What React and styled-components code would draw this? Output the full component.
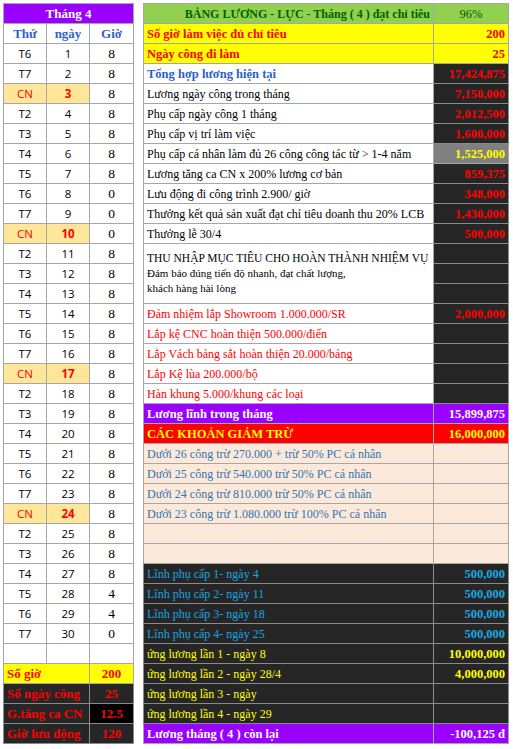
import React from 'react'
import styled, { createGlobalStyle } from 'styled-components'

const GlobalStyle = createGlobalStyle`
  html, body {
    margin: 0;
    padding: 0;
    background: #ffffff;
  }
  body {
    font-family: "Liberation Serif", "Times New Roman", serif;
  }
`

const Page = styled.div`
  display: flex;
  align-items: flex-start;
  gap: 9px;
  padding: 3px 0 0 3px;
  width: 513px;
  height: 749px;
  box-sizing: border-box;
`

const Sheet = styled.table`
  border-collapse: collapse;
  table-layout: fixed;
  width: ${(p) => p.$width}px;
  border: 1px solid #8c8c8c;
`

const Row = styled.tr`
  height: 20px;
`

const Cell = styled.td`
  height: 19px;
  padding: 0 3px;
  border: 1px solid #a6a6a6;
  white-space: nowrap;
  overflow: hidden;
  font-size: ${(p) => p.$size || (p.$bold ? 12.5 : 12)}px;
  font-weight: ${(p) => (p.$bold ? 700 : 400)};
  text-align: ${(p) => p.$align || 'left'};
  color: ${(p) => p.$color || '#000000'};
  background: ${(p) => p.$bg || '#ffffff'};
  border-color: ${(p) => (p.$dark ? '#8a8a8a' : '#a6a6a6')};
  line-height: 18px;
  vertical-align: middle;
`

const ValueCell = styled(Cell)`
  text-align: right;
  font-size: 12.5px;
  font-weight: 700;
  padding-right: 3px;
`

const DayCell = styled(Cell)`
  font-family: "Open Sans", "Liberation Sans", sans-serif;
  font-size: 11.5px;
  text-align: center;
  padding: 0;
`

const HourCell = styled(Cell)`
  text-align: center;
  font-size: 13.5px;
  line-height: 16px;
`

const BlockCell = styled(Cell)`
  white-space: nowrap;
  vertical-align: top;
  padding: 7px 3px 0;
  line-height: 15px;
`

const BlockTitle = styled.div`
  font-size: 11.5px;
`

const BlockNote = styled.div`
  font-size: 11px;
`

const DARK = '#262626'
const PURPLE = '#9900ff'
const YELLOW = '#ffff00'
const RED = '#ff0000'
const PEACH = '#fde9d9'
const CN_BG = '#ffe699'
const CYAN = '#1aa6e0'
const BLUE = '#2a62c9'

const DAY_NAMES = ['T2', 'T3', 'T4', 'T5', 'T6', 'T7', 'CN']
const HOURS = [
  8, 8, 8, 8, 8, 8, 8, 0, 0, 0, 8, 8, 8, 8, 8, 8, 8, 8, 8, 8, 8, 8, 8, 8, 8, 8, 8, 4, 4, 0,
]

const days = HOURS.map((h, i) => ({
  name: DAY_NAMES[(i + 4) % 7],
  day: i + 1,
  hours: h,
}))

const rows = [
  { label: 'Số giờ làm việc đủ chỉ tiêu', value: '200', bg: YELLOW, color: RED, bold: true, valBg: YELLOW, valColor: RED },
  { label: 'Ngày công đi làm', value: '25', bg: YELLOW, color: RED, bold: true, valBg: YELLOW, valColor: RED },
  { label: 'Tổng hợp lương hiện tại', value: '17,424,875', color: BLUE, bold: true, valBg: DARK, valColor: RED },
  { label: 'Lương ngày công trong tháng', value: '7,150,000', valBg: DARK, valColor: RED },
  { label: 'Phụ cấp ngày công 1 tháng', value: '2,012,500', valBg: DARK, valColor: RED },
  { label: 'Phụ cấp vị trí làm việc', value: '1,600,000', valBg: DARK, valColor: RED },
  { label: 'Phụ cấp cá nhân làm đủ 26 công công tác từ > 1-4 năm', value: '1,525,000', valBg: '#808080', valColor: YELLOW },
  { label: 'Lương tăng ca CN x 200% lương cơ bản', value: '859,375', valBg: DARK, valColor: RED },
  { label: 'Lưu động đi công trình 2.900/ giờ', value: '348,000', valBg: DARK, valColor: RED },
  { label: 'Thưởng kết quả sản xuất đạt chỉ tiêu doanh thu 20% LCB', value: '1,430,000', valBg: DARK, valColor: RED },
  { label: 'Thưởng lễ 30/4', value: '500,000', valBg: DARK, valColor: RED },
  { block: true },
  { label: 'Đảm nhiệm lắp Showroom 1.000.000/SR', value: '2,000,000', color: RED, valBg: DARK, valColor: RED },
  { label: 'Lắp kệ CNC hoàn thiện 500.000/điển', value: '', color: RED, valBg: DARK },
  { label: 'Lắp Vách bảng sắt hoàn thiện 20.000/bảng', value: '', color: RED, valBg: DARK },
  { label: 'Lắp Kệ lùa 200.000/bộ', value: '', color: RED, valBg: DARK },
  { label: 'Hàn khung 5.000/khung các loại', value: '', color: RED, valBg: DARK },
  { label: 'Lương lĩnh trong tháng', value: '15,899,875', bg: PURPLE, color: '#ffffff', bold: true, valBg: PURPLE, valColor: '#ffffff' },
  { label: 'CÁC KHOẢN GIẢM TRỪ', value: '16,000,000', bg: RED, color: YELLOW, bold: true, valBg: RED, valColor: YELLOW },
  { label: 'Dưới 26 công trừ 270.000 + trừ 50% PC cá nhân', value: '', bg: PEACH, color: '#2e75b6', valBg: PEACH },
  { label: 'Dưới 25 công trừ 540.000 trừ 50% PC cá nhân', value: '', bg: PEACH, color: '#2e75b6', valBg: PEACH },
  { label: 'Dưới 24 công trừ 810.000 trừ 50% PC cá nhân', value: '', bg: PEACH, color: '#2e75b6', valBg: PEACH },
  { label: 'Dưới 23 công trừ 1.080.000 trừ 100% PC cá nhân', value: '', bg: PEACH, color: '#2e75b6', valBg: PEACH },
  { label: '', value: '', bg: PEACH, valBg: PEACH },
  { label: '', value: '', bg: PEACH, valBg: PEACH },
  { label: 'Lĩnh phụ cấp 1- ngày 4', value: '500,000', bg: DARK, color: CYAN, valBg: DARK, valColor: CYAN },
  { label: 'Lĩnh phụ cấp 2- ngày 11', value: '500,000', bg: DARK, color: CYAN, valBg: DARK, valColor: CYAN },
  { label: 'Lĩnh phụ cấp 3- ngày 18', value: '500,000', bg: DARK, color: CYAN, valBg: DARK, valColor: CYAN },
  { label: 'Lĩnh phụ cấp 4- ngày 25', value: '500,000', bg: DARK, color: CYAN, valBg: DARK, valColor: CYAN },
  { label: 'ứng lương lần 1 - ngày 8', value: '10,000,000', bg: DARK, color: YELLOW, valBg: DARK, valColor: YELLOW },
  { label: 'ứng lương lần 2 - ngày 28/4', value: '4,000,000', bg: DARK, color: YELLOW, valBg: DARK, valColor: YELLOW },
  { label: 'ứng lương lần 3 - ngày', value: '', bg: DARK, color: YELLOW, valBg: DARK },
  { label: 'ứng lương lần 4 - ngày 29', value: '', bg: DARK, color: YELLOW, valBg: DARK },
  { label: 'Lương tháng ( 4 ) còn lại', value: '-100,125 đ', bg: PURPLE, color: '#ffffff', bold: true, valBg: PURPLE, valColor: '#ffffff' },
]

const totals = [
  { label: 'Số giờ', value: '200', bg: YELLOW, valBg: YELLOW },
  { label: 'Số ngày công', value: '25', bg: DARK, valBg: DARK },
  { label: 'G.tăng ca CN', value: '12.5', bg: DARK, valBg: '#000000' },
  { label: 'Giờ lưu động', value: '120', bg: DARK, valBg: DARK },
]

function DayTable() {
  return (
    <Sheet $width={130}>
      <colgroup>
        <col style={{ width: 43 }} />
        <col style={{ width: 43 }} />
        <col style={{ width: 44 }} />
      </colgroup>
      <tbody>
        <Row>
          <Cell colSpan={3} $bg={PURPLE} $color="#ffffff" $bold $align="center" $size={13}>
            Tháng 4
          </Cell>
        </Row>
        <Row>
          <Cell $bold $align="center" $color={BLUE} $size={13}>Thứ</Cell>
          <Cell $bold $align="center" $color={BLUE} $size={13}>ngày</Cell>
          <Cell $bold $align="center" $color={BLUE} $size={13}>Giờ</Cell>
        </Row>
        {days.map((d) => {
          const sunday = d.name === 'CN'
          return (
            <Row key={d.day}>
              <DayCell $bg={sunday ? CN_BG : '#ffffff'} $color={sunday ? RED : '#000000'}>
                {d.name}
              </DayCell>
              <DayCell $bg={sunday ? CN_BG : '#ffffff'} $color={sunday ? RED : '#000000'} $bold={sunday}>
                {d.day}
              </DayCell>
              <HourCell>{d.hours}</HourCell>
            </Row>
          )
        })}
        <Row>
          <Cell />
          <Cell />
          <Cell />
        </Row>
        {totals.map((t) => (
          <Row key={t.label}>
            <Cell colSpan={2} $bg={t.bg} $color={RED} $bold $size={13} $dark={t.bg !== YELLOW}>
              {t.label}
            </Cell>
            <Cell $bg={t.valBg} $color={RED} $bold $size={13} $align="center" $dark={t.bg !== YELLOW}>
              {t.value}
            </Cell>
          </Row>
        ))}
      </tbody>
    </Sheet>
  )
}

function SalaryTable() {
  return (
    <Sheet $width={365}>
      <colgroup>
        <col style={{ width: 290 }} />
        <col style={{ width: 75 }} />
      </colgroup>
      <tbody>
        <Row>
          <Cell $bg="#92d050" $color="#006100" $bold $align="right" $size={12}>
            BẢNG LƯƠNG - LỰC - Tháng ( 4 ) đạt chỉ tiêu
          </Cell>
          <Cell $bg="#92d050" $color="#006100" $align="center" $size={12.5}>96%</Cell>
        </Row>
        {rows.map((r, i) => {
          if (r.block) {
            return (
              <React.Fragment key={i}>
                <Row>
                  <BlockCell rowSpan={3}>
                    <BlockTitle>THU NHẬP MỤC TIÊU CHO HOÀN THÀNH NHIỆM VỤ</BlockTitle>
                    <BlockNote>Đảm bảo đúng tiến độ nhanh, đạt chất lượng,</BlockNote>
                    <BlockNote>khách hàng hài lòng</BlockNote>
                  </BlockCell>
                  <Cell $bg={DARK} $dark />
                </Row>
                <Row>
                  <Cell $bg={DARK} $dark />
                </Row>
                <Row>
                  <Cell $bg={DARK} $dark />
                </Row>
              </React.Fragment>
            )
          }
          return (
            <Row key={i}>
              <Cell $bg={r.bg} $color={r.color} $bold={r.bold} $dark={r.bg === DARK}>
                {r.label}
              </Cell>
              <ValueCell $bg={r.valBg} $color={r.valColor} $dark={r.valBg === DARK}>
                {r.value}
              </ValueCell>
            </Row>
          )
        })}
      </tbody>
    </Sheet>
  )
}

export default function App() {
  return (
    <>
      <GlobalStyle />
      <Page>
        <DayTable />
        <SalaryTable />
      </Page>
    </>
  )
}
